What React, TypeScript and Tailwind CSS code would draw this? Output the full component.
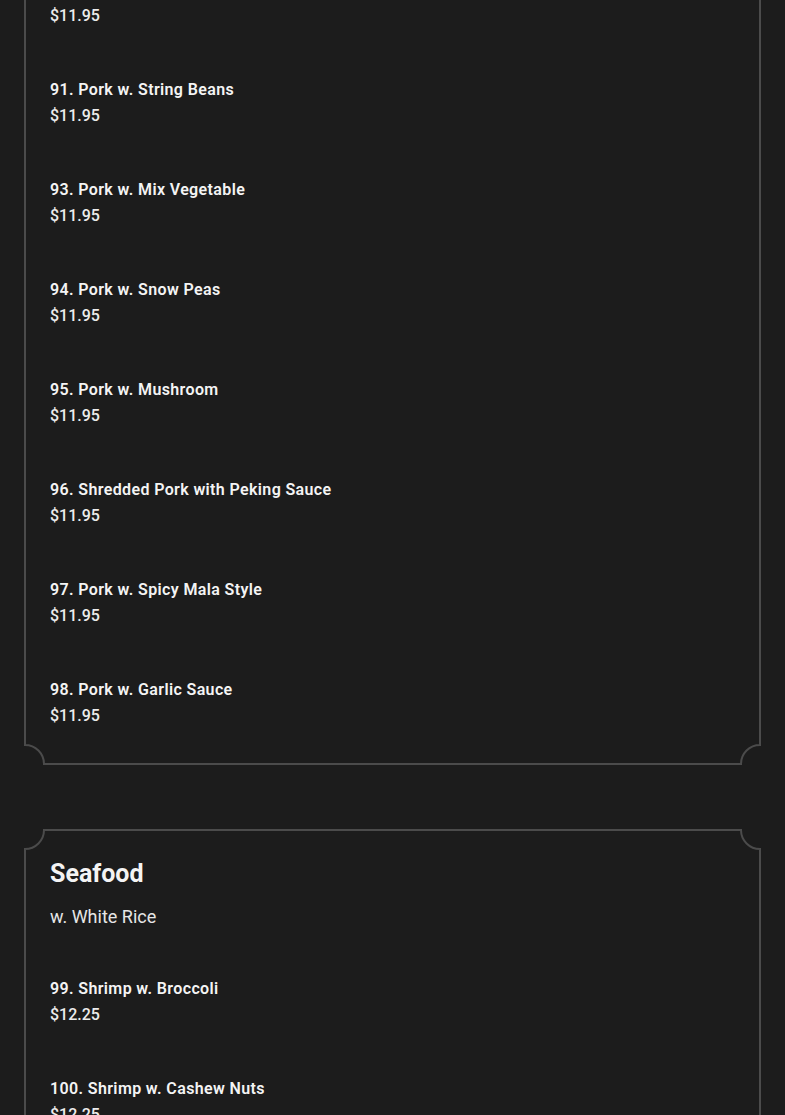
import { FC } from "react";

type Item = { name: string; price: string };

const porkItems: Item[] = [
  { name: "91. Pork w. String Beans", price: "$11.95" },
  { name: "93. Pork w. Mix Vegetable", price: "$11.95" },
  { name: "94. Pork w. Snow Peas", price: "$11.95" },
  { name: "95. Pork w. Mushroom", price: "$11.95" },
  { name: "96. Shredded Pork with Peking Sauce", price: "$11.95" },
  { name: "97. Pork w. Spicy Mala Style", price: "$11.95" },
  { name: "98. Pork w. Garlic Sauce", price: "$11.95" },
];

const seafoodItems: Item[] = [
  { name: "99. Shrimp w. Broccoli", price: "$12.25" },
  { name: "100. Shrimp w. Cashew Nuts", price: "$12.25" },
];

// scalloped corner, drawn for bottom-left and flipped for the others
const Corner: FC<{ className: string }> = ({ className }) => (
  <svg
    width="22"
    height="22"
    viewBox="0 0 22 22"
    className={`absolute pointer-events-none ${className}`}
  >
    <rect x="0" y="0" width="22" height="22" fill="#1c1c1c" />
    <path
      d="M1 0 V2 A19 19 0 0 1 20 21 H22"
      fill="none"
      stroke="#4b4b4b"
      strokeWidth="2"
    />
  </svg>
);

const MenuItem: FC<{ item: Item }> = ({ item }) => (
  <div className="flex flex-col">
    <div className="text-[16px] leading-[26px] font-semibold tracking-[0.37px] text-[#f4f4f4]">
      {item.name}
    </div>
    <div className="text-[16px] leading-[26px] font-medium text-[#ececec]">
      {item.price}
    </div>
  </div>
);

export default function App() {
  return (
    <div className="min-h-screen bg-[#1c1c1c] px-6 font-['Roboto',sans-serif]">
      {/* Pork (scrolled) */}
      <div className="relative border-2 border-t-0 border-[#4b4b4b] px-6 pt-[3px] pb-[34px]">
        <div className="text-[16px] leading-[26px] font-medium text-[#ececec]">
          $11.95
        </div>
        <div className="flex flex-col gap-12 mt-12">
          {porkItems.map((it) => (
            <MenuItem key={it.name} item={it} />
          ))}
        </div>
        <Corner className="left-[-2px] bottom-[-2px]" />
        <Corner className="right-[-2px] bottom-[-2px] -scale-x-100" />
      </div>

      {/* Seafood */}
      <div className="relative mt-16 border-2 border-[#4b4b4b] px-6 pt-[27px] pb-10">
        <h2 className="text-[25px] leading-[32px] font-bold text-[#f4f4f4]">
          Seafood
        </h2>
        <p className="mt-[14px] text-[18px] leading-[26px] text-[#e6e6e6]">
          w. White Rice
        </p>
        <div className="flex flex-col gap-12 mt-[46px]">
          {seafoodItems.map((it) => (
            <MenuItem key={it.name} item={it} />
          ))}
        </div>
        <Corner className="left-[-2px] top-[-2px] -scale-y-100" />
        <Corner className="right-[-2px] top-[-2px] rotate-180" />
      </div>
    </div>
  );
}
